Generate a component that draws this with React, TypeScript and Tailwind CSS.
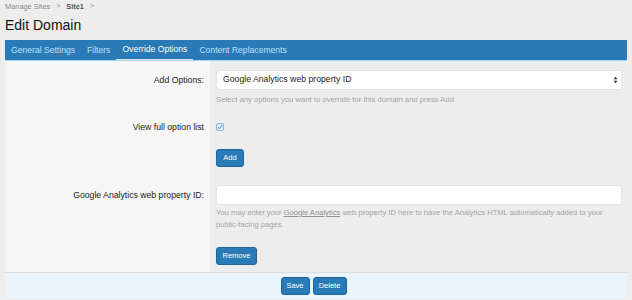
import React from 'react';

const tabs = ['General Settings', 'Filters', 'Override Options', 'Content Replacements'];

const Btn: React.FC<{ label: string; className?: string }> = ({ label, className = '' }) => (
  <button
    className={`h-[18px] rounded-[3px] border border-[#1f659c] bg-[#2a7ab8] text-[7.5px] text-white leading-none ${className}`}
  >
    {label}
  </button>
);

const App: React.FC = () => {
  return (
    <div
      className="w-[632px] h-[300px] bg-[#ededed] text-[#222] overflow-hidden"
      style={{ fontFamily: '"Liberation Sans", Arial, sans-serif' }}
    >
      {/* breadcrumb + titre */}
      <div className="px-[5px] pt-[1px]">
        <div className="flex items-center h-[11px] text-[7.4px] text-[#8a8a8a]">
          <span>Manage Sites</span>
          <span className="mx-[6px] text-[7px]">&gt;</span>
          <span className="font-bold text-[#555]">Site1</span>
          <span className="mx-[6px] text-[7px]">&gt;</span>
        </div>
        <h1 className="text-[14px] leading-[22px] mt-[2px] text-[#111]">Edit Domain</h1>
      </div>

      <div className="mx-[5px] mt-[4px]">
        {/* onglets */}
        <div className="flex h-[21px] bg-[#2a7ab8] border-b border-[#a9d3f1]">
          {tabs.map((t, i) => (
            <div
              key={i}
              className={`flex items-center px-[6px] text-[8.6px] ${
                i === 2 ? 'text-white border-b border-[#cfe7f9]' : 'text-[#bde0f8]'
              }`}
            >
              {t}
            </div>
          ))}
        </div>

        {/* lignes du formulaire */}
        <div className="grid grid-cols-[205px_1fr] text-[8.7px]">
          {/* Add Options */}
          <div className="bg-[#f6f6f6] pt-[9px] pr-[6px] text-right">
            <div className="h-[20px] leading-[20px]">Add Options:</div>
          </div>
          <div className="pt-[9px] pl-[6px] pr-[5px]">
            <div className="flex items-center justify-between h-[20px] bg-white rounded-[3px] border border-[#e4e4e4] pl-[6px] pr-[3px]">
              <span>Google Analytics web property ID</span>
              <svg width="5" height="8" viewBox="0 0 5 8">
                <path d="M0.5 3.2 L2.5 0.8 L4.5 3.2 Z M0.5 4.8 L2.5 7.2 L4.5 4.8 Z" fill="#333" />
              </svg>
            </div>
            <div className="mt-[4px] leading-[12px] text-[7.7px] text-[#a3a3a3]">
              Select any options you want to override for this domain and press Add
            </div>
          </div>

          {/* View full option list */}
          <div className="bg-[#f6f6f6] pt-[15px] pr-[6px] text-right">
            <div className="h-[12px] leading-[12px]">View full option list</div>
          </div>
          <div className="pt-[15px] pl-[6px]">
            <div className="h-[12px] flex items-center">
              <span className="w-[8px] h-[8px] rounded-[2px] border border-[#86b7e2] bg-[#dcedfb] flex items-center justify-center">
                <svg width="6" height="6" viewBox="0 0 6 6">
                  <path d="M1 3.2 L2.4 4.6 L5 1.4" fill="none" stroke="#3a86c8" strokeWidth="1" />
                </svg>
              </span>
            </div>
            <Btn label="Add" className="mt-[16px] w-[28px]" />
          </div>

          {/* Google Analytics */}
          <div className="bg-[#f6f6f6] pt-[18px] pr-[6px] text-right">
            <div className="h-[20px] leading-[20px]">Google Analytics web property ID:</div>
          </div>
          <div className="pt-[18px] pl-[6px] pr-[5px] pb-[7px]">
            <div className="h-[20px] bg-white rounded-[3px] border border-[#e4e4e4]" />
            <p className="mt-[2px] leading-[12px] text-[7.6px] text-[#a3a3a3]">
              You may enter your <u className="text-[#8f8f8f]">Google Analytics</u> web property ID here to have the
              Analytics HTML automatically added to your public-facing pages.
            </p>
            <Btn label="Remove" className="mt-[16px] w-[41px]" />
          </div>
        </div>

        {/* pied */}
        <div className="flex justify-center gap-[3px] h-[26px] pt-[4px] bg-[#eaf4fc] border-t border-[#dcdcdc] pr-[5px]">
          <Btn label="Save" className="w-[29px]" />
          <Btn label="Delete" className="w-[34px]" />
        </div>
      </div>
    </div>
  );
};

export default App;
